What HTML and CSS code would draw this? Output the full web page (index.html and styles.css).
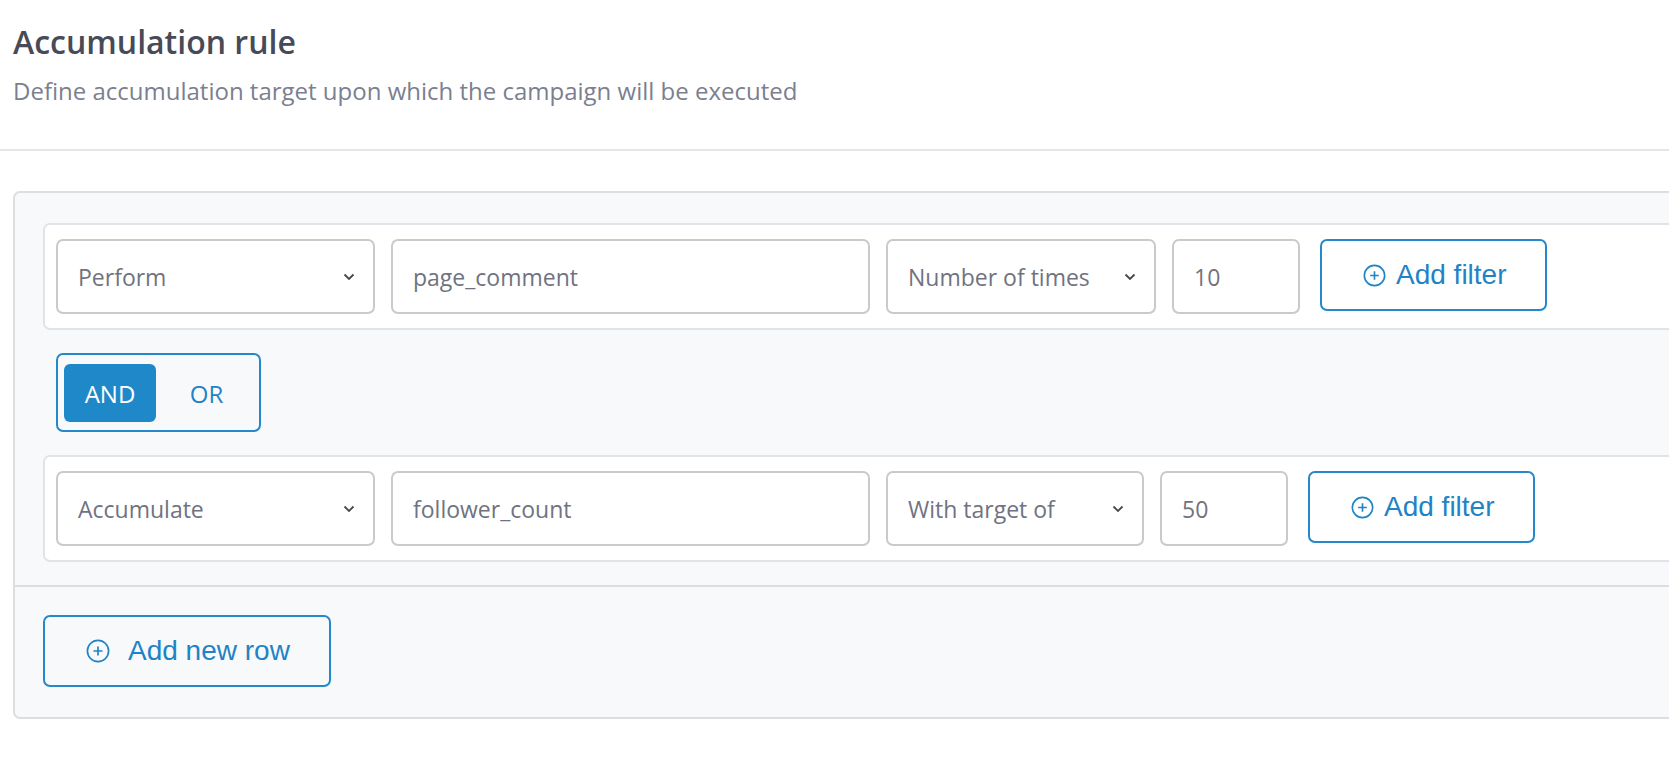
FILE: index.html
```html
<!DOCTYPE html>
<html>
	<head>
		<title>Accumulation rule</title>
		<link rel="stylesheet" href="styles.css">
	</head>
	<body>
		<div class="header">
			<h1 class="title">Accumulation rule</h1>
			<p class="subtitle">Define accumulation target upon which the campaign will be executed</p>
		</div>
		<div class="panel">
			<div class="rules">
				<div class="rule">
					<div class="field select w-kind"><span>Perform</span><svg class="chevron" viewBox="0 0 12 8"><path d="M1.5 1.5 6 6l4.5-4.5"/></svg></div>
					<div class="field w-name"><span>page_comment</span></div>
					<div class="field select w-mode"><span>Number of times</span><svg class="chevron" viewBox="0 0 12 8"><path d="M1.5 1.5 6 6l4.5-4.5"/></svg></div>
					<div class="field w-num"><span>10</span></div>
					<button class="outline-btn filter-btn"><svg class="plus" viewBox="0 0 24 24"><circle cx="12" cy="12" r="10.6"/><path d="M12 7.5v9M7.5 12h9"/></svg><span>Add filter</span></button>
				</div>
				<div class="toggle">
					<button class="toggle-btn active">AND</button>
					<button class="toggle-btn or">OR</button>
				</div>
				<div class="rule">
					<div class="field select w-kind"><span>Accumulate</span><svg class="chevron" viewBox="0 0 12 8"><path d="M1.5 1.5 6 6l4.5-4.5"/></svg></div>
					<div class="field w-name"><span>follower_count</span></div>
					<div class="field select w-mode2"><span>With target of</span><svg class="chevron" viewBox="0 0 12 8"><path d="M1.5 1.5 6 6l4.5-4.5"/></svg></div>
					<div class="field w-num"><span>50</span></div>
					<button class="outline-btn filter-btn"><svg class="plus" viewBox="0 0 24 24"><circle cx="12" cy="12" r="10.6"/><path d="M12 7.5v9M7.5 12h9"/></svg><span>Add filter</span></button>
				</div>
			</div>
			<div class="footer">
				<button class="outline-btn row-btn"><svg class="plus" viewBox="0 0 24 24"><circle cx="12" cy="12" r="10.6"/><path d="M12 7.5v9M7.5 12h9"/></svg><span>Add new row</span></button>
			</div>
		</div>
	</body>
</html>
```

FILE: styles.css
```css
html, body {margin: 0; padding: 0; overflow: hidden; background: #fff;}
body {font-family: "Open Sans", sans-serif; color: #474a57;}

.header {padding: 22px 13px 44px; border-bottom: 2px solid #e3e5ea;}
.title {margin: 0; font-size: 32px; line-height: 40px; font-weight: 600; color: #474a57;}
.subtitle {margin: 15px 0 0; font-size: 24px; line-height: 28px; color: #7b7f8f;}

.panel {margin: 40px -40px 0 13px; border: 2px solid #dcdee2; border-radius: 7px; background: #f8f9fb;}
.rules {padding: 30px 28px 23px; display: flex; flex-direction: column; align-items: flex-start; gap: 23px;}
.rule {align-self: stretch; display: flex; align-items: flex-start; gap: 16px; padding: 14px 11px; background: #fff; border: 2px solid #e1e3e8; border-radius: 7px;}

.field {box-sizing: border-box; height: 75px; display: flex; align-items: center; justify-content: space-between; padding: 0 18px 0 20px; border: 2px solid #c9cacc; border-radius: 7px; background: #fff; font-size: 23px; color: #70737f;}
.w-kind {width: 319px;}
.w-name {width: 479px;}
.w-mode {width: 270px;}
.w-mode2 {width: 258px;}
.w-num {width: 128px;}
.chevron {width: 12px; height: 8px; fill: none; stroke: #45474d; stroke-width: 1.8;}

.outline-btn {box-sizing: border-box; display: flex; align-items: center; border: 2px solid #2389cb; border-radius: 7px; background: transparent; color: #1f83c5; font-family: "Liberation Sans", Arial, sans-serif; font-size: 28px; padding: 0; cursor: pointer;}
.plus {flex: none; width: 23px; height: 23px; fill: none; stroke: #1f83c5; stroke-width: 1.7;}
.filter-btn {width: 227px; height: 72px; margin-left: 4px; padding-left: 41px; gap: 10px; background: #fff;}
.row-btn {width: 288px; height: 72px; padding-left: 41px; gap: 18px;}
.row-btn .plus {width: 24px; height: 24px;}

.toggle {margin-left: 13px; display: flex; padding: 9px 2px 8px 6px; border: 2px solid #2389cb; border-radius: 7px;}
.toggle-btn {width: 101px; height: 58px; border: 0; border-radius: 6px; background: transparent; color: #1f83c5; font-family: "Open Sans", sans-serif; font-size: 24px; font-weight: 500; padding: 0;}
.toggle-btn.active {width: 92px; background: #1f88c9; color: #fff;}

.footer {border-top: 2px solid #dcdee2; padding: 28px 28px 30px;}
```
